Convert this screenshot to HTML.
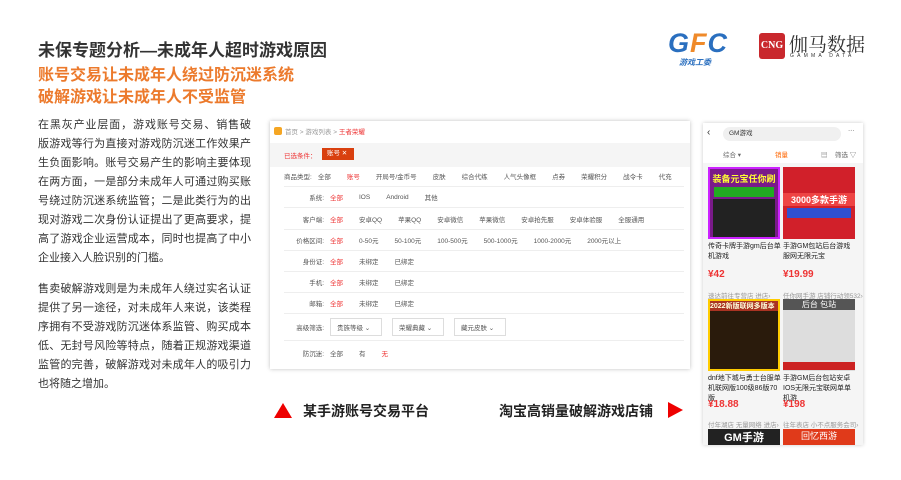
<!DOCTYPE html>
<html><head><meta charset="utf-8"><style>
*{margin:0;padding:0;box-sizing:border-box}
body{width:901px;height:480px;background:#fff;font-family:"Liberation Sans","Noto Sans CJK SC",sans-serif;position:relative;overflow:hidden;color:#333}
.a{position:absolute}
.t1{left:38px;top:36px;font-size:17px;font-weight:bold;color:#333}
.t2{left:38px;top:65px;font-size:16px;font-weight:bold;color:#ec7a2c;line-height:22px}
.body{left:38px;top:116px;width:213px;font-size:11px;line-height:19px;color:#333}
.body div{text-align:justify;text-align-last:justify}
.body div.e{text-align-last:left}
.shot{left:270px;top:121px;width:420px;height:248px;background:#fff;box-shadow:0 0 4px rgba(0,0,0,.25);font-size:6.5px;color:#555;white-space:nowrap}
.row{position:absolute;left:14px;right:6px;border-bottom:1px solid #eee;height:21px;display:flex;align-items:center}
.row .l{width:40px;text-align:right;margin-right:6px;color:#555}
.row span{margin-right:16px}
.r{color:#e33}
.sel{border:1px solid #ddd;padding:3px 6px;width:52px;margin-right:10px;background:#fff}
.phone{left:703px;top:123px;width:160px;height:322px;background:#f5f5f5;box-shadow:0 0 4px rgba(0,0,0,.2);overflow:hidden;font-size:6.5px}
.img{position:absolute;width:72px;height:72px}
.cap{position:absolute;width:74px;font-size:7px;line-height:10px;color:#222}
.price{position:absolute;color:#e33;font-size:10px;font-weight:bold}
</style></head><body>
<div class="a t1">未保专题分析—未成年人超时游戏原因</div>
<div class="a t2">账号交易让未成年人绕过防沉迷系统<br>破解游戏让未成年人不受监管</div>
<div class="a body">
<div>在黑灰产业层面，游戏账号交易、销售破</div>
<div>版游戏等行为直接对游戏防沉迷工作效果产</div>
<div>生负面影响。账号交易产生的影响主要体现</div>
<div>在两方面，一是部分未成年人可通过购买账</div>
<div>号绕过防沉迷系统监管；二是此类行为的出</div>
<div>现对游戏二次身份认证提出了更高要求，提</div>
<div>高了游戏企业运营成本，同时也提高了中小</div>
<div class="e">企业接入人脸识别的门槛。</div>
<div style="height:12px"></div>
<div>售卖破解游戏则是为未成年人绕过实名认证</div>
<div>提供了另一途径，对未成年人来说，该类程</div>
<div>序拥有不受游戏防沉迷体系监管、购买成本</div>
<div>低、无封号风险等特点，随着正规游戏渠道</div>
<div>监管的完善，破解游戏对未成年人的吸引力</div>
<div class="e">也将随之增加。</div>
</div>

<div class="a" style="left:668px;top:28px;font-size:27px;font-weight:bold;font-style:italic;color:#2a6fbf;letter-spacing:1px">G<span style="color:#ef8a2a">F</span>C</div>
<div class="a" style="left:679px;top:57px;font-size:8px;font-weight:bold;font-style:italic;color:#2a6fbf">游戏工委</div>
<div class="a" style="left:759px;top:33px;width:26px;height:26px;background:#c9282d;border-radius:3px;color:#fff;font-size:10px;font-weight:bold;text-align:center;line-height:26px;font-family:'Liberation Serif',serif">CNG</div>
<div class="a" style="left:789px;top:30px;font-size:19px;color:#333;font-family:'Liberation Serif','Noto Serif CJK SC',serif">伽马数据</div>
<div class="a" style="left:790px;top:53px;font-size:5px;letter-spacing:3.2px;color:#333">GAMMA DATA</div>

<div class="a shot">
<div class="a" style="left:4px;top:6px;width:8px;height:8px;background:#f5a623;border-radius:2px"></div>
<div class="a" style="left:15px;top:5px;color:#999">首页 &gt; 游戏列表 &gt; <span class="r">王者荣耀</span></div>
<div class="a" style="left:0;top:22px;width:420px;height:24px;background:#f5f5f5"></div>
<div class="a r" style="left:14px;top:29px">已选条件：</div>
<div class="a" style="left:52px;top:27px;width:32px;height:12px;background:#d9400f;color:#fff;padding-left:5px;line-height:12px">账号 ✕</div>
<div class="row" style="top:45px"><span class="l">商品类型:</span><span>全部</span><span class="r">账号</span><span>开局号/金币号</span><span>皮肤</span><span>综合代练</span><span>人气头像框</span><span>点券</span><span>荣耀积分</span><span>战令卡</span><span>代充</span></div>
<div class="row" style="top:66px"><span class="l">系统:</span><span class="r">全部</span><span>IOS</span><span>Android</span><span>其他</span></div>
<div class="row" style="top:88px"><span class="l">客户端:</span><span class="r">全部</span><span>安卓QQ</span><span>苹果QQ</span><span>安卓微信</span><span>苹果微信</span><span>安卓抢先服</span><span>安卓体验服</span><span>全服通用</span></div>
<div class="row" style="top:109px"><span class="l">价格区间:</span><span class="r">全部</span><span>0-50元</span><span>50-100元</span><span>100-500元</span><span>500-1000元</span><span>1000-2000元</span><span>2000元以上</span></div>
<div class="row" style="top:130px"><span class="l">身份证:</span><span class="r">全部</span><span>未绑定</span><span>已绑定</span></div>
<div class="row" style="top:151px"><span class="l">手机:</span><span class="r">全部</span><span>未绑定</span><span>已绑定</span></div>
<div class="row" style="top:172px"><span class="l">邮箱:</span><span class="r">全部</span><span>未绑定</span><span>已绑定</span></div>
<div class="row" style="top:193px;height:27px"><span class="l">高级筛选:</span><div class="sel">贵族等级 ⌄</div><div class="sel">荣耀典藏 ⌄</div><div class="sel">藏元皮肤 ⌄</div></div>
<div class="row" style="top:220px;height:24px;border:none"><span class="l">防沉迷:</span><span>全部</span><span>有</span><span class="r">无</span></div>
</div>

<div class="a phone">
<div class="a" style="left:0;top:0;width:160px;height:40px;background:#fff"></div>
<div class="a" style="left:4px;top:4px;font-size:10px">‹</div>
<div class="a" style="left:20px;top:4px;width:118px;height:14px;background:#f0f0f0;border-radius:7px;padding-left:6px;line-height:14px">GM游戏</div>
<div class="a" style="left:145px;top:4px">···</div>
<div class="a" style="left:20px;top:26px;color:#666">综合 ▾</div>
<div class="a" style="left:72px;top:26px;color:#f60">销量</div>
<div class="a" style="left:118px;top:26px;color:#666">▤</div>
<div class="a" style="left:132px;top:26px;color:#666">筛选 ▽</div>
<div class="img" style="left:5px;top:44px;background:#7a1a8a;border:2px solid #c2f"><div style="color:#ff3;font-size:9px;font-weight:bold;text-align:center;margin-top:3px">装备元宝任你刷</div><div style="background:#2a2;height:10px;margin:2px 4px"></div><div style="background:#222;height:38px;margin:2px 3px"></div></div>
<div class="img" style="left:80px;top:44px;background:#d1202a"><div style="color:#fff;font-size:9px;font-weight:bold;margin-top:26px;text-align:center;background:#e44;">3000多款手游</div><div style="background:#3050d0;height:10px;margin:2px 4px"></div></div>
<div class="cap" style="left:5px;top:119px">传奇卡牌手游gm后台单机游戏</div>
<div class="cap" style="left:80px;top:119px">手游GM包站后台游戏服网无限元宝</div>
<div class="price" style="left:5px;top:146px">¥42</div>
<div class="price" style="left:80px;top:146px">¥19.99</div>
<div class="a" style="left:5px;top:167px;color:#999">速达前往专营店 进店›</div>
<div class="a" style="left:80px;top:167px;color:#999">任你网手游 店铺行动领532›</div>
<div class="img" style="left:5px;top:176px;background:#2a1b0c;border:2px solid #fc0"><div style="color:#ffd;font-size:7px;font-weight:bold;background:#a32">2022新版联网多版本</div></div>
<div class="img" style="left:80px;top:176px;background:#ddd"><div style="background:#555;color:#fff;font-size:8px;text-align:center">后台 包站</div><div style="background:#c22;height:8px;margin-top:52px"></div></div>
<div class="cap" style="left:5px;top:251px">dnf地下城与勇士台服单机联网版100级86版70版</div>
<div class="cap" style="left:80px;top:251px">手游GM后台包站安卓IOS无限元宝联网单单机游</div>
<div class="price" style="left:5px;top:276px">¥18.88</div>
<div class="price" style="left:80px;top:276px">¥198</div>
<div class="a" style="left:5px;top:296px;color:#999">付年湖店 无量网络 进店›</div>
<div class="a" style="left:80px;top:296px;color:#999">往年表店 小不点服务会司›</div>
<div class="a" style="left:5px;top:306px;width:72px;height:16px;background:#222;color:#fff;font-size:11px;font-weight:bold;text-align:center">GM手游</div>
<div class="a" style="left:80px;top:306px;width:72px;height:16px;background:#e03a1a;color:#fff;font-size:9px;text-align:center">回忆西游</div>
</div>

<div class="a" style="left:274px;top:403px;width:0;height:0;border-left:9px solid transparent;border-right:9px solid transparent;border-bottom:15px solid #e00"></div>
<div class="a" style="left:303px;top:401px;font-size:14px;font-weight:bold;color:#222">某手游账号交易平台</div>
<div class="a" style="left:499px;top:401px;font-size:14px;font-weight:bold;color:#222">淘宝高销量破解游戏店铺</div>
<div class="a" style="left:668px;top:402px;width:0;height:0;border-top:8px solid transparent;border-bottom:8px solid transparent;border-left:15px solid #e00"></div>
</body></html>
